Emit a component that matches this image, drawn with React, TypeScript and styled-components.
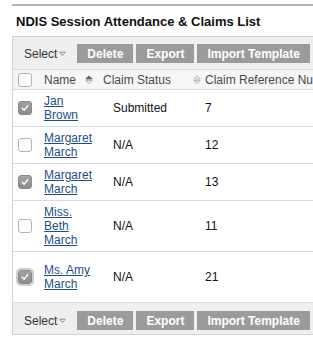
import React from "react";
import styled, { createGlobalStyle } from "styled-components";

const Global = createGlobalStyle`
  html, body { margin: 0; padding: 0; overflow: hidden; background: #fff; }
  body { font-family: "Liberation Sans", Arial, Helvetica, sans-serif; color: #222; }
`;

const Page = styled.div`
  padding: 4px 0 0 12px;
  width: 700px;
`;

const TopRule = styled.div`
  height: 2px;
  background: #b4b4b4;
`;

const Title = styled.h1`
  margin: 0;
  height: 30px;
  display: flex;
  align-items: center;
  padding-left: 4px;
  font-size: 13px;
  font-weight: bold;
  color: #111;
`;

const Panel = styled.div`
  border: 1px solid #c6d4e0;
  border-right: none;
`;

const Toolbar = styled.div<{ $top?: boolean }>`
  display: flex;
  align-items: flex-start;
  background: #efefef;
  height: ${(p) => (p.$top ? 32 : 31)}px;
  padding: ${(p) => (p.$top ? 7 : 8)}px 0 0 11px;
  box-sizing: border-box;
`;

const SelectMenu = styled.div`
  display: flex;
  align-items: center;
  gap: 2px;
  height: 19px;
  font-size: 12px;
  color: #333;
  margin-right: 11px;
`;

const Button = styled.button`
  height: 19px;
  border: none;
  margin: 0 3px 0 0;
  padding: 0 10px;
  background: #9b9b9b;
  color: #fff;
  font-family: inherit;
  font-size: 12px;
  font-weight: bold;
  white-space: nowrap;
  flex-shrink: 0;
`;

const Row = styled.div<{ $h: number; $header?: boolean }>`
  display: grid;
  grid-template-columns: 25px 59px 106px 1fr;
  align-items: center;
  height: ${(p) => p.$h}px;
  box-sizing: border-box;
  border-bottom: 1px solid #d3dde7;
  ${(p) => (p.$header ? "border-top: 1px solid #dcdcdc; background: #f6f6f6;" : "background: #fff;")}
  font-size: 12px;
`;

const CheckCell = styled.div`
  padding-left: 5px;
  display: flex;
  align-items: center;
`;

const HeadCell = styled.div<{ $pl: number; $pr: number }>`
  display: flex;
  align-items: center;
  justify-content: space-between;
  padding: 0 ${(p) => p.$pr}px 0 ${(p) => p.$pl}px;
  color: #4a4a4a;
  white-space: nowrap;
  overflow: hidden;
`;

const Cell = styled.div<{ $pl: number }>`
  padding-left: ${(p) => p.$pl}px;
  color: #111;
  white-space: nowrap;
`;

const NameLink = styled.a`
  display: block;
  padding-left: 6px;
  line-height: 14px;
  color: #1d4f86;
  text-decoration: underline;
  font-size: 12px;
`;

const Box = styled.span<{ $checked?: boolean; $focus?: boolean }>`
  width: 14px;
  height: 14px;
  box-sizing: border-box;
  border-radius: 3px;
  display: inline-flex;
  align-items: center;
  justify-content: center;
  border: 1px solid ${(p) => (p.$checked ? "#8a8a8a" : "#b3b3b3")};
  background: ${(p) =>
    p.$checked ? "linear-gradient(#a3a3a3, #8c8c8c)" : "#fff"};
  ${(p) => (p.$focus ? "box-shadow: 0 0 0 2px #cdcdcd;" : "")}
`;

const Check = ({ checked, focus }: { checked?: boolean; focus?: boolean }) => (
  <Box $checked={checked} $focus={focus}>
    {checked && (
      <svg width="8" height="8" viewBox="0 0 8 8">
        <path d="M1.2 4.3 L3.1 6.2 L6.8 1.6" fill="none" stroke="#fff" strokeWidth="1.4" strokeLinecap="round" strokeLinejoin="round" />
      </svg>
    )}
  </Box>
);

const SortIcon = ({ active }: { active?: boolean }) => (
  <svg width="8" height="10" viewBox="0 0 8 10">
    <path d="M0.8 4 L4 0.8 L7.2 4 Z" fill={active ? "#666" : "none"} stroke={active ? "#666" : "#aaa"} strokeWidth="0.9" />
    <path d="M0.8 5.6 L4 8.8 L7.2 5.6 Z" fill="none" stroke="#aaa" strokeWidth="0.9" />
  </svg>
);

const Caret = () => (
  <svg width="7" height="6" viewBox="0 0 7 6">
    <path d="M0.7 1.2 L6.3 1.2 L3.5 4.5 Z" fill="none" stroke="#888" strokeWidth="0.9" />
  </svg>
);

const Actions = ({ top }: { top?: boolean }) => (
  <Toolbar $top={top}>
    <SelectMenu>
      Select <Caret />
    </SelectMenu>
    <Button>Delete</Button>
    <Button>Export</Button>
    <Button>Import Template</Button>
    <Button>Bulk Update</Button>
  </Toolbar>
);

const rows = [
  { name: ["Jan", "Brown"], status: "Submitted", ref: "7", checked: true, h: 37 },
  { name: ["Margaret", "March"], status: "N/A", ref: "12", checked: false, h: 37 },
  { name: ["Margaret", "March"], status: "N/A", ref: "13", checked: true, h: 37 },
  { name: ["Miss.", "Beth", "March"], status: "N/A", ref: "11", checked: false, h: 51 },
  { name: ["Ms. Amy", "March"], status: "N/A", ref: "21", checked: true, focus: true, h: 51 },
];

export default function App() {
  return (
    <>
      <Global />
      <Page>
        <TopRule />
        <Title>NDIS Session Attendance &amp; Claims List</Title>
        <Panel>
          <Actions top />
          <Row $h={21} $header>
            <CheckCell>
              <Check />
            </CheckCell>
            <HeadCell $pl={6} $pr={4}>
              Name <SortIcon active />
            </HeadCell>
            <HeadCell $pl={6} $pr={2}>
              Claim Status <SortIcon />
            </HeadCell>
            <HeadCell $pl={2} $pr={0}>
              Claim Reference Number
            </HeadCell>
          </Row>
          {rows.map((r, i) => (
            <Row key={i} $h={r.h}>
              <CheckCell>
                <Check checked={r.checked} focus={r.focus} />
              </CheckCell>
              <div>
                <NameLink href="#">
                  {r.name.map((n, j) => (
                    <React.Fragment key={j}>
                      {j > 0 && <br />}
                      {n}
                    </React.Fragment>
                  ))}
                </NameLink>
              </div>
              <Cell $pl={16}>{r.status}</Cell>
              <Cell $pl={2}>{r.ref}</Cell>
            </Row>
          ))}
          <Actions />
        </Panel>
      </Page>
    </>
  );
}
